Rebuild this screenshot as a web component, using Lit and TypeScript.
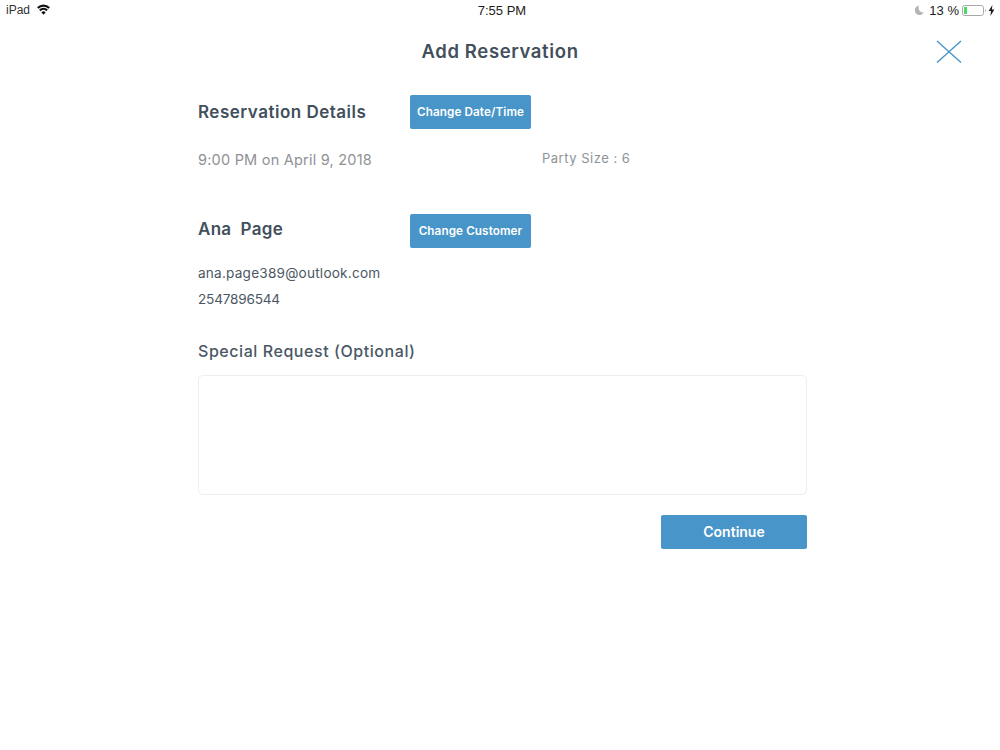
import { LitElement, html, css } from "lit";
import { customElement } from "lit/decorators.js";

@customElement("app-root")
export class AppRoot extends LitElement {
  static styles = css`
    :host { display: block; width: 1000px; height: 750px; background: #fff; font-family: Inter, "Liberation Sans", sans-serif; color: #424f5c; overflow: hidden; }
    .status { display: grid; grid-template-columns: 1fr auto 1fr; align-items: center; height: 20px; padding: 0 5px 0 6px; font-family: "Liberation Sans", Arial, sans-serif; font-size: 13px; color: #1c1c1c; }
    .status-left { display: flex; align-items: center; gap: 7px; font-size: 12px; color: #333; }
    .status-left svg { margin-top: -1px; }
    .wifi { fill: none; stroke: #111; stroke-width: 2.2; }
    .wifi-dot { fill: #111; }
    .time { font-size: 13px; padding-left: 3px; }
    .status-right { display: flex; align-items: center; justify-content: flex-end; }
    .moon { margin-right: 5px; }
    .pct { margin-right: 3px; }
    .bolt { margin-left: 1px; }
    .header { display: flex; align-items: center; justify-content: center; height: 62px; position: relative; }
    .title { margin: 0; font-size: 18.5px; font-weight: 600; color: #424f5c; letter-spacing: 0.63px; }
    .close { position: absolute; left: 936px; top: 20px; display: block; }
    .close-line { stroke: #4795c9; stroke-width: 1.4; fill: none; }
    .content { width: 609px; margin-left: 198px; padding-top: 13px; }
    .row { display: flex; align-items: center; }
    .heading { width: 212px; margin: 0; font-size: 17px; font-weight: 600; color: #424f5c; white-space: pre; letter-spacing: 0.5px; }
    .customer .heading { margin-top: -4px; letter-spacing: 0.3px; }
    .btn { width: 121px; height: 34px; background: #4795c9; border: none; border-radius: 2px; color: #fff; font: 600 11.7px Inter, "Liberation Sans", sans-serif; letter-spacing: 0.1px; padding: 0; white-space: nowrap; }
    .meta { display: flex; margin-top: 20px; height: 22px; color: #8e9296; }
    .date { width: 344px; font-size: 14.5px; padding-top: 2px; letter-spacing: 0.22px; }
    .party { font-size: 13px; letter-spacing: 0.5px; padding-top: 1px; }
    .customer { margin-top: 43px; }
    .line { font-size: 13.6px; color: #4b5763; margin: 0; line-height: 20px; }
    .email { margin-top: 15px; letter-spacing: 0.22px; }
    .phone { margin-top: 6px; letter-spacing: -0.2px; }
    .label { margin: 31px 0 0; font-size: 16px; font-weight: 500; line-height: 22px; color: #4a5866; letter-spacing: 0.56px; }
    .box { display: block; box-sizing: border-box; margin: 13px 0 0; width: 609px; height: 120px; border: 1px solid #eeeeee; border-radius: 5px; background: #fff; resize: none; }
    .actions { display: flex; justify-content: flex-end; margin-top: 20px; }
    .continue { width: 146px; height: 34px; background: #4795c9; border: none; border-radius: 2px; color: #fff; font: 600 14px Inter, "Liberation Sans", sans-serif; padding: 0 0 2px; }
  `;

  render() {
    return html`
      <div class="status">
        <div class="status-left">
          <span>iPad</span>
          <svg width="13" height="11" viewBox="0 0 13 11">
            <path class="wifi-dot" d="M6.5 10.8 L4.4 8.4 A3 3 0 0 1 8.6 8.4 Z"/>
            <path class="wifi" d="M0.8 4 A8.2 8.2 0 0 1 12.2 4"/>
            <path class="wifi" d="M2.9 6.4 A5.2 5.2 0 0 1 10.1 6.4"/>
          </svg>
        </div>
        <div class="time">7:55 PM</div>
        <div class="status-right">
          <svg class="moon" width="9" height="10" viewBox="0 0 9 10"><path d="M4 0.5 A4.8 4.8 0 1 0 8.8 7.6 A5 5 0 0 1 4 0.5 Z" fill="#b5b5b5"/></svg>
          <span class="pct">13 %</span>
          <svg width="25" height="11" viewBox="0 0 25 11">
            <rect x="0.5" y="0.5" width="21" height="10" rx="2.2" fill="none" stroke="#a9a9a9"/>
            <rect x="2" y="2" width="3" height="7" fill="#4cd964"/>
            <path d="M23 3.7 a2.2 2.2 0 0 1 0 3.6 Z" fill="#a9a9a9"/>
          </svg>
          <svg class="bolt" width="7" height="11" viewBox="0 0 7 11"><path d="M4.4 0 L0.6 6 H3 L2.4 11 L6.4 4.6 H3.9 Z" fill="#1c1c1c"/></svg>
        </div>
      </div>
      <div class="header">
        <h1 class="title">Add Reservation</h1>
        <svg class="close" width="26" height="24" viewBox="0 0 26 24">
          <path class="close-line" d="M1 1 L25 22.5 M25 1 L1 22.5"/>
        </svg>
      </div>
      <div class="content">
        <div class="row">
          <h2 class="heading">Reservation Details</h2>
          <button class="btn">Change Date/Time</button>
        </div>
        <div class="meta">
          <div class="date">9:00 PM on April 9, 2018</div>
          <div class="party">Party Size : 6</div>
        </div>
        <div class="row customer">
          <h2 class="heading">Ana  Page</h2>
          <button class="btn">Change Customer</button>
        </div>
        <p class="line email">ana.page389@outlook.com</p>
        <p class="line phone">2547896544</p>
        <p class="label">Special Request (Optional)</p>
        <textarea class="box"></textarea>
        <div class="actions"><button class="continue">Continue</button></div>
      </div>
    `;
  }
}
